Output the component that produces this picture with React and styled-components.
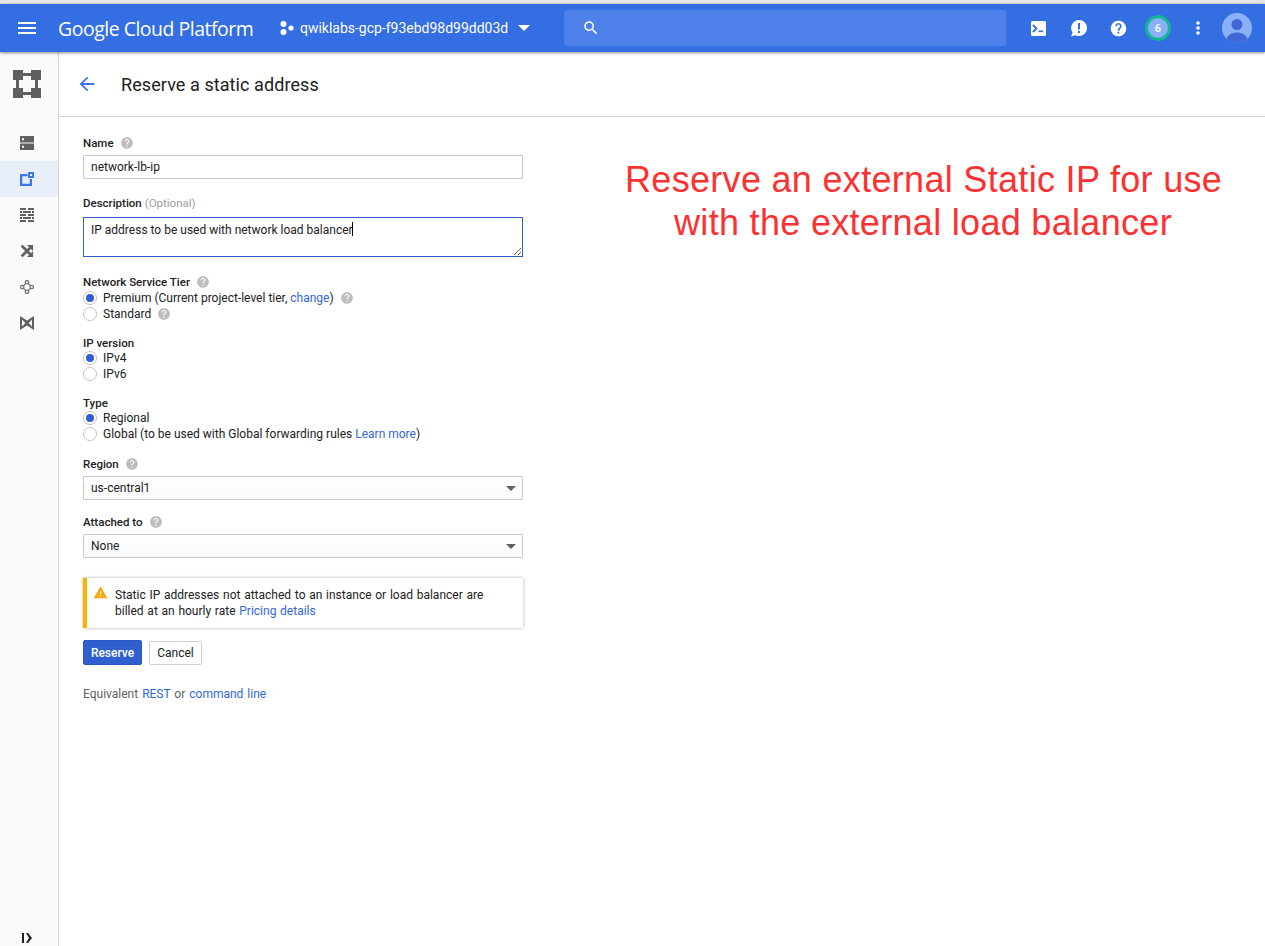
import React from 'react';
import styled, { createGlobalStyle } from 'styled-components';

const GlobalStyle = createGlobalStyle`
  html, body { margin: 0; padding: 0; background: #fff; }
  body { font-family: Roboto, "Liberation Sans", sans-serif; font-size: 12px; color: #212121; }
`;

const Page = styled.div`
  height: 946px;
  overflow: hidden;
  display: flex;
  flex-direction: column;
  padding-top: 4px;
  background: #fff;
  box-sizing: border-box;
  position: relative;
  &::before {
    content: '';
    position: absolute;
    left: 0;
    right: 0;
    top: 0;
    height: 4px;
    background: #e6e6e6;
  }
`;

const TopBar = styled.header`
  height: 48px;
  flex: none;
  display: flex;
  align-items: center;
  background: #336ee2;
  box-shadow: 0 1px 3px rgba(0, 0, 0, 0.45);
  padding: 0 13px 0 15px;
  color: #fff;
  position: relative;
  z-index: 2;
`;

const Logo = styled.div`
  margin-left: 19px;
  width: 222px;
  flex: none;
  font-size: 19.5px;
  letter-spacing: -0.5px;
  white-space: nowrap;
  font-family: "Open Sans", Roboto, sans-serif;
`;

const ProjectPicker = styled.div`
  display: flex;
  align-items: center;
  width: 284px;
  flex: none;
  font-size: 14px;
  letter-spacing: -0.01px;
  gap: 6px;
`;

const Caret = styled.span`
  width: 0;
  height: 0;
  margin-left: ${({ $left }) => $left || 0}px;
  border-left: ${({ $size }) => $size}px solid transparent;
  border-right: ${({ $size }) => $size}px solid transparent;
  border-top: ${({ $size }) => $size}px solid ${({ $color }) => $color || '#fff'};
`;

const SearchBox = styled.div`
  width: 442px;
  height: 36px;
  flex: none;
  border-radius: 3px;
  background: #4d80e8;
  display: flex;
  align-items: center;
  padding-left: 18px;
  box-sizing: border-box;
`;

const TopIcons = styled.div`
  margin-left: auto;
  display: flex;
  align-items: center;
`;

const TopIcon = styled.div`
  width: 40px;
  height: 48px;
  display: flex;
  align-items: center;
  justify-content: center;
`;

const Badge = styled.div`
  width: 20px;
  height: 20px;
  border-radius: 50%;
  background: #8ab0f7;
  border: 3px solid #12b594;
  display: flex;
  align-items: center;
  justify-content: center;
  font-size: 11px;
  font-weight: 500;
`;

const Avatar = styled.div`
  margin-left: 4px;
  width: 30px;
  height: 30px;
`;

const Body = styled.div`
  flex: 1;
  display: flex;
  min-height: 0;
`;

const Sidebar = styled.nav`
  width: 58px;
  flex: none;
  background: #fafafa;
  border-right: 1px solid #d4d4d4;
  display: flex;
  flex-direction: column;
`;

const SideHead = styled.div`
  height: 64px;
  flex: none;
  display: flex;
  align-items: center;
  justify-content: center;
  padding-right: 4px;
  margin-bottom: 9px;
`;

const SideItem = styled.div`
  height: 36px;
  display: flex;
  align-items: center;
  justify-content: center;
  padding-right: 4px;
  background: ${({ $active }) => ($active ? '#e8eff9' : 'transparent')};
`;

const Collapse = styled.div`
  margin-top: auto;
  height: 16px;
  display: flex;
  align-items: center;
  justify-content: center;
  padding-right: 4px;
`;

const Main = styled.main`
  flex: 1;
  display: flex;
  flex-direction: column;
  min-width: 0;
`;

const Header = styled.div`
  height: 65px;
  flex: none;
  box-sizing: border-box;
  display: flex;
  align-items: center;
  border-bottom: 1px solid #d4d4d4;
  padding-left: 17px;
`;

const Title = styled.h1`
  margin: 0 0 0 23px;
  font-size: 18px;
  font-weight: 400;
  color: #212121;
  letter-spacing: 0.08px;
`;

const Content = styled.div`
  flex: 1;
  display: flex;
`;

const Form = styled.div`
  width: 440px;
  flex: none;
  margin-left: 24px;
  padding-top: 18px;
`;

const Label = styled.div`
  height: 16px;
  line-height: 16px;
  margin-top: ${({ $top }) => $top || 0}px;
  font-weight: 500;
  font-size: 11.5px;
  color: #212121;
  display: flex;
  align-items: center;
  gap: 6px;
`;

const Optional = styled.span`
  margin-left: -3px;
  font-weight: 400;
  color: #9e9e9e;
`;

const TextInput = styled.input`
  display: block;
  margin: 4px 0 0;
  width: 100%;
  height: 24px;
  box-sizing: border-box;
  border: 1px solid #c9c9c9;
  border-radius: 1px;
  padding: 0 7px;
  font: 12px Roboto, sans-serif;
  color: #212121;
  outline: none;
`;

const AreaWrap = styled.div`
  position: relative;
  margin-top: 6px;
  height: 40px;
`;

const TextArea = styled.textarea`
  display: block;
  width: 100%;
  height: 40px;
  box-sizing: border-box;
  border: 1px solid #2f5fcf;
  padding: 4px 7px;
  font: 12px/16px Roboto, sans-serif;
  color: #212121;
  outline: none;
  resize: vertical;
`;

const TextCaret = styled.span`
  position: absolute;
  left: 269px;
  top: 5px;
  width: 1px;
  height: 14px;
  background: #000;
`;

const Radio = styled.div`
  height: 16px;
  display: flex;
  align-items: center;
  gap: 6px;
  margin-top: ${({ $top }) => $top || 0}px;
  color: #212121;
`;

const RadioDot = styled.span`
  width: 14px;
  height: 14px;
  box-sizing: border-box;
  border-radius: 50%;
  border: 1px solid #c4c4c4;
  background: #fff;
  display: flex;
  align-items: center;
  justify-content: center;
  &::after {
    content: '';
    width: 8px;
    height: 8px;
    border-radius: 50%;
    background: ${({ $on }) => ($on ? '#2f5fcf' : 'transparent')};
  }
`;

const Link = styled.a`
  color: #3367d6;
  text-decoration: none;
`;

const Select = styled.div`
  margin-top: 4px;
  height: 24px;
  box-sizing: border-box;
  border: 1px solid #c9c9c9;
  border-radius: 1px;
  padding: 0 6px 0 7px;
  display: flex;
  align-items: center;
  justify-content: space-between;
  color: #212121;
  background: linear-gradient(#fff, #fafafa);
`;

const Notice = styled.div`
  margin-top: 20px;
  height: 50px;
  box-sizing: border-box;
  border-left: 4px solid #f4b400;
  box-shadow: 0 0 3px rgba(0, 0, 0, 0.32);
  display: flex;
  align-items: center;
  padding-left: 6px;
  gap: 7px;
  line-height: 16px;
  word-spacing: 0.75px;
  & > svg {
    flex: none;
    align-self: flex-start;
    margin-top: 7px;
  }
`;

const Buttons = styled.div`
  margin-top: 12px;
  display: flex;
  align-items: flex-end;
  gap: 7px;
`;

const PrimaryButton = styled.button`
  width: 59px;
  height: 25px;
  border: 1px solid #2a56c6;
  border-radius: 2px;
  background: #2f5fcf;
  color: #fff;
  font: 500 12px Roboto, sans-serif;
  padding: 0;
`;

const SecondaryButton = styled.button`
  width: 53px;
  height: 24px;
  border: 1px solid #cfcfcf;
  border-radius: 2px;
  background: #fff;
  color: #212121;
  font: 12px Roboto, sans-serif;
  padding: 0;
`;

const Equivalent = styled.div`
  margin-top: 21px;
  line-height: 16px;
  color: #616161;
  word-spacing: 1px;
`;

const Annotation = styled.div`
  margin: 41px 0 0 102px;
  width: 596px;
  flex: none;
  text-align: center;
  font-family: "Liberation Sans", Arial, sans-serif;
  font-size: 36px;
  line-height: 43px;
  color: #fc3131;
  letter-spacing: 0.31px;
  white-space: nowrap;
`;

const HELP = 'M12 2C6.48 2 2 6.48 2 12s4.48 10 10 10 10-4.48 10-10S17.52 2 12 2zm1 17h-2v-2h2v2zm2.07-7.75l-.9.92C13.45 12.9 13 13.5 13 15h-2v-.5c0-1.1.45-2.1 1.17-2.83l1.24-1.26c.37-.36.59-.86.59-1.41 0-1.1-.9-2-2-2s-2 .9-2 2H8c0-2.21 1.79-4 4-4s4 1.79 4 4c0 .88-.36 1.68-.93 2.25z';

const Icon = ({ size = 24, color = '#fff', d, children }) => (
  <svg width={size} height={size} viewBox="0 0 24 24" fill={color}>
    {d && <path d={d} fillRule="evenodd" />}
    {children}
  </svg>
);

const Help = () => <Icon size={14} color="#bdbdbd" d={HELP} />;

const App = () => (
  <>
    <GlobalStyle />
    <Page>
      <TopBar>
        <Icon d="M3 18h18v-2H3v2zm0-5h18v-2H3v2zm0-7v2h18V6H3z" />
        <Logo>Google Cloud Platform</Logo>
        <ProjectPicker>
          <svg width="14" height="14" viewBox="0 0 14 14" fill="#fff">
            <circle cx="3.5" cy="3" r="3" />
            <circle cx="3.5" cy="11" r="3" />
            <circle cx="11" cy="7" r="2.6" />
          </svg>
          <span>qwiklabs-gcp-f93ebd98d99dd03d</span>
          <Caret $size={6} $left={4} />
        </ProjectPicker>
        <SearchBox>
          <Icon size={18} d="M15.5 14h-.79l-.28-.27C15.41 12.59 16 11.11 16 9.5 16 5.91 13.09 3 9.5 3S3 5.91 3 9.5 5.91 16 9.5 16c1.61 0 3.09-.59 4.23-1.57l.27.28v.79l5 4.99L20.49 19l-4.99-5zm-6 0C7.01 14 5 11.99 5 9.5S7.01 5 9.5 5 14 7.01 14 9.5 11.99 14 9.5 14z" />
        </SearchBox>
        <TopIcons>
          <TopIcon>
            <svg width="15" height="15" viewBox="0 0 15 15">
              <rect width="15" height="15" rx="1.5" fill="#fff" />
              <path d="M2 4l3.500 3.500L2 11" fill="none" stroke="#336ee2" strokeWidth="1.800" />
              <rect x="7.500" y="9.500" width="4.500" height="1.600" fill="#336ee2" />
            </svg>
          </TopIcon>
          <TopIcon>
            <svg width="17" height="17" viewBox="0 0 17 17" fill="#fff">
              <path d="M9 0a8 8 0 0 1 0 16c-1.600 0-2.800-.4-3.600-.8L1 16.600l1.600-4A8 8 0 0 1 9 0z" />
              <rect x="8" y="3" width="2" height="6.500" fill="#336ee2" />
              <rect x="8" y="11" width="2" height="2" fill="#336ee2" />
            </svg>
          </TopIcon>
          <TopIcon>
            <Icon size={17} d="M12 1C5.900 1 1 5.900 1 12s4.900 11 11 11 11-4.900 11-11S18.100 1 12 1zm1.200 18h-2.400v-2.400h2.400V19zm2.300-7.700l-1 1C13.700 14 13.200 14.600 13.200 15.300h-2.400v-.6c0-1.200.5-2.300 1.300-3.100l1.400-1.400c.4-.4.600-.9.600-1.500 0-1.200-1-2.200-2.100-2.200S9.900 7.500 9.900 8.700H7.600C7.600 6.200 9.600 4.300 12 4.300s4.400 1.900 4.400 4.400c0 1-.4 1.900-.9 2.600z" />
          </TopIcon>
          <TopIcon>
            <Badge>6</Badge>
          </TopIcon>
          <TopIcon>
            <svg width="4" height="14" viewBox="0 0 4 14" fill="#fff">
              <circle cx="2" cy="2" r="1.800" />
              <circle cx="2" cy="7" r="1.800" />
              <circle cx="2" cy="12" r="1.800" />
            </svg>
          </TopIcon>
          <Avatar>
            <svg width="30" height="30" viewBox="0 0 30 30">
              <defs>
                <clipPath id="avatarClip">
                  <circle cx="15" cy="15" r="15" />
                </clipPath>
              </defs>
              <circle cx="15" cy="15" r="15" fill="#8ab0f7" />
              <circle cx="15" cy="11.500" r="5.500" fill="#3f68d4" />
              <path d="M5 30v-4c0-4 5-6.500 10-6.500S25 22 25 26v4z" fill="#3f68d4" clipPath="url(#avatarClip)" />
            </svg>
          </Avatar>
        </TopIcons>
      </TopBar>

      <Body>
        <Sidebar>
          <SideHead>
            <svg width="28" height="28" viewBox="0 0 28 28" fill="#5f5f5f">
              <rect x="0" y="0" width="10" height="10" />
              <rect x="18" y="0" width="10" height="10" />
              <rect x="0" y="18" width="10" height="10" />
              <rect x="18" y="18" width="10" height="10" />
              <rect x="10" y="3" width="8" height="3" />
              <rect x="10" y="22" width="8" height="3" />
              <rect x="3" y="10" width="3" height="8" />
              <rect x="22" y="10" width="3" height="8" />
            </svg>
          </SideHead>
          <SideItem>
            <svg width="14" height="14" viewBox="0 0 14 14" fill="#616161">
              <path fillRule="evenodd" d="M0 0h14v6.400H0zM2 2.200v2h2v-2zM0 7.600h14V14H0zm2 2.200v2h2v-2z" />
            </svg>
          </SideItem>
          <SideItem $active>
            <svg width="14" height="14" viewBox="0 0 14 14" fill="#3f75e8">
              <path d="M0 2h7.500v2.300H2.300v7.400h7.400V7H12v7H0z" />
              <path fillRule="evenodd" d="M8 0h6v6H8zM10 2v2h2V2z" />
            </svg>
          </SideItem>
          <SideItem>
            <svg width="14" height="14" viewBox="0 0 14 14" fill="#616161">
              <path d="M0 0h6v2H0zM8 0h6v2H8zM0 3h2v2H0zM3 3h8v2H3zM12 3h2v2h-2zM0 6h6v2H0zM8 6h6v2H8zM0 9h2v2H0zM3 9h8v2H3zM12 9h2v2h-2zM0 12h6v2H0zM8 12h6v2H8z" />
            </svg>
          </SideItem>
          <SideItem>
            <svg width="16" height="16" viewBox="0 0 24 24" fill="#616161" stroke="#616161" strokeWidth="2.200">
              <path d="M10.590 9.170L5.410 4 4 5.410l5.170 5.170 1.420-1.410zM14.500 4l2.040 2.040L4 18.590 5.410 20 17.960 7.460 20 9.500V4h-5.500zm.33 9.410l-1.410 1.410 3.130 3.130L14.500 20H20v-5.500l-2.040 2.040-3.130-3.130z" />
            </svg>
          </SideItem>
          <SideItem>
            <svg width="14" height="14" viewBox="0 0 14 14" fill="none" stroke="#757575" strokeWidth="1.300">
              <circle cx="7" cy="2.200" r="1.700" />
              <circle cx="7" cy="11.800" r="1.700" />
              <circle cx="2.200" cy="7" r="1.700" />
              <circle cx="11.800" cy="7" r="1.700" />
              <path d="M5.800 3.400L3.400 5.800M8.200 3.400l2.400 2.400M3.400 8.200l2.400 2.400M10.600 8.200l-2.400 2.400" />
            </svg>
          </SideItem>
          <SideItem>
            <svg width="14" height="14" viewBox="0 0 14 14" fill="#616161">
              <path fillRule="evenodd" d="M0 0l7 4.500L14 0v14L7 9.500 0 14zM2 3.500v7L5.300 7zm10 0L8.700 7l3.300 3.500z" />
            </svg>
          </SideItem>
          <Collapse>
            <svg width="10" height="10" viewBox="0 0 10 10" fill="#212121">
              <rect x="0" y="0" width="2" height="10" />
              <path d="M4 0h2l4 5-4 5H4l3-5z" />
            </svg>
          </Collapse>
        </Sidebar>

        <Main>
          <Header>
            <Icon size={22} color="#3f75e8" d="M20 11H7.830l5.590-5.590L12 4l-8 8 8 8 1.410-1.410L7.830 13H20v-2z" />
            <Title>Reserve a static address</Title>
          </Header>
          <Content>
            <Form>
              <Label>Name <Help /></Label>
              <TextInput defaultValue="network-lb-ip" />

              <Label $top={16}>Description <Optional>(Optional)</Optional></Label>
              <AreaWrap>
                <TextArea defaultValue="IP address to be used with network load balancer" />
                <TextCaret />
              </AreaWrap>

              <Label $top={17}>Network Service Tier <Help /></Label>
              <Radio>
                <RadioDot $on />
                <span>Premium (Current project-level tier, <Link>change</Link>)</span>
                <Help />
              </Radio>
              <Radio>
                <RadioDot />
                <span>Standard</span>
                <Help />
              </Radio>

              <Label $top={13}>IP version</Label>
              <Radio $top={-1}>
                <RadioDot $on />
                <span>IPv4</span>
              </Radio>
              <Radio>
                <RadioDot />
                <span>IPv6</span>
              </Radio>

              <Label $top={13}>Type</Label>
              <Radio $top={-1}>
                <RadioDot $on />
                <span>Regional</span>
              </Radio>
              <Radio>
                <RadioDot />
                <span>Global (to be used with Global forwarding rules <Link>Learn more</Link>)</span>
              </Radio>

              <Label $top={14}>Region <Help /></Label>
              <Select>
                <span>us-central1</span>
                <Caret $size={5} $color="#616161" />
              </Select>

              <Label $top={14}>Attached to <Help /></Label>
              <Select>
                <span>None</span>
                <Caret $size={5} $color="#616161" />
              </Select>

              <Notice>
                <Icon size={15} color="#f4a911" d="M1 21h22L12 2 1 21zm12-3h-2v-2h2v2zm0-4h-2v-4h2v4z" />
                <span>
                  Static IP addresses not attached to an instance or load balancer are
                  <br />
                  billed at an hourly rate <Link>Pricing details</Link>
                </span>
              </Notice>

              <Buttons>
                <PrimaryButton>Reserve</PrimaryButton>
                <SecondaryButton>Cancel</SecondaryButton>
              </Buttons>

              <Equivalent>
                Equivalent <Link>REST</Link> or <Link>command line</Link>
              </Equivalent>
            </Form>
            <Annotation>
              Reserve an external Static IP for use
              <br />
              with the external load balancer
            </Annotation>
          </Content>
        </Main>
      </Body>
    </Page>
  </>
);

export default App;
